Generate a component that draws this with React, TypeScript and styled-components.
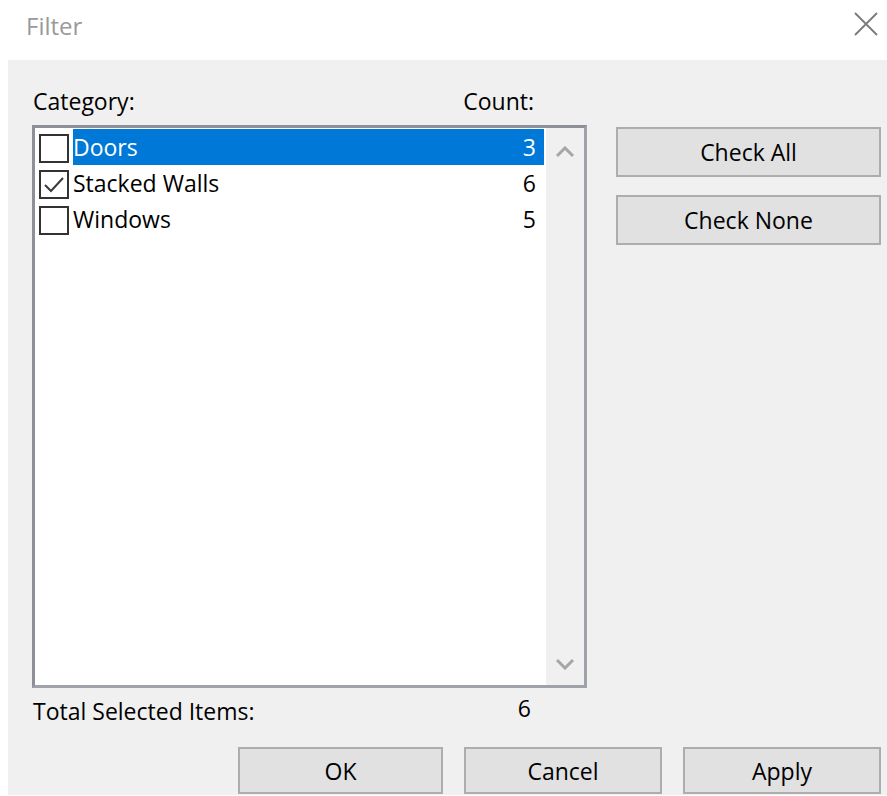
import { createGlobalStyle, styled } from "styled-components";

const GlobalStyle = createGlobalStyle`
  html, body {
    margin: 0;
    padding: 0;
    background: #ffffff;
  }
  body {
    font-family: "Open Sans", "Noto Sans", "Liberation Sans", sans-serif;
  }
`;

//window frame
const Window = styled.div`
  width: 887px;
  height: 796px;
  display: flex;
  flex-direction: column;
  background: #ffffff;
`;

const TitleBar = styled.div`
  height: 60px;
  display: flex;
  align-items: center;
  justify-content: space-between;
  padding: 0 6px 0 26px;
  box-sizing: border-box;
`;

const Title = styled.span`
  font-size: 24px;
  color: #9a9a9a;
  margin-top: -10px;
`;

const CloseButton = styled.div`
  width: 30px;
  height: 30px;
  display: flex;
  align-items: center;
  justify-content: center;
  margin-top: -12px;
`;

const Body = styled.div`
  flex: 1;
  margin: 0 0 1px 8px;
  background: #f0f0f0;
  display: flex;
  flex-direction: column;
  padding: 26px 6px 0 24px;
  box-sizing: border-box;
  font-size: 23px;
  color: #000;
`;

const Main = styled.div`
  display: flex;
  gap: 29px;
`;

const LeftColumn = styled.div`
  width: 555px;
  display: flex;
  flex-direction: column;
`;

const HeaderRow = styled.div`
  height: 30px;
  line-height: 30px;
  display: flex;
  justify-content: space-between;
  padding: 0 53px 0 1px;
  margin-bottom: 9px;
`;

//list box with its own scrollbar
const ListBox = styled.div`
  height: 563px;
  box-sizing: border-box;
  border: 3px solid #9fa2a8;
  border-top-color: #8d9096;
  border-left-color: #8d9096;
  background: #ffffff;
  display: flex;
`;

const List = styled.ul`
  flex: 1;
  margin: 0;
  padding: 1px 2px 0 4px;
  list-style: none;
`;

const Row = styled.li`
  height: 36px;
  display: flex;
  align-items: center;
`;

const CheckBox = styled.span`
  width: 30px;
  height: 29px;
  box-sizing: border-box;
  border: 2px solid #333333;
  background: #ffffff;
  display: flex;
  align-items: center;
  justify-content: center;
  margin: 3px 4px 0 0;
  flex-shrink: 0;
`;

const Item = styled.div<{ $selected: boolean }>`
  flex: 1;
  height: 36px;
  display: flex;
  align-items: center;
  justify-content: space-between;
  padding-right: 8px;
  background: ${(p) => (p.$selected ? "#0078d7" : "transparent")};
  color: ${(p) => (p.$selected ? "#ffffff" : "#000000")};
`;

const ScrollBar = styled.div`
  width: 38px;
  background: #f0f0f0;
  display: flex;
  flex-direction: column;
  justify-content: space-between;
  align-items: center;
  padding: 18px 0 15px;
  box-sizing: border-box;
`;

const TotalRow = styled.div`
  height: 40px;
  padding: 6px 56px 0 1px;
  box-sizing: border-box;
  display: flex;
  justify-content: space-between;
  align-items: center;
`;

const TotalCount = styled.span`
  margin-top: -6px;
`;

const SideButtons = styled.div`
  width: 265px;
  padding-top: 41px;
  display: flex;
  flex-direction: column;
  gap: 18px;
`;

const Button = styled.button<{ $width?: number }>`
  width: ${(p) => (p.$width ? `${p.$width}px` : "100%")};
  height: ${(p) => (p.$width ? "47px" : "50px")};
  background: #e1e1e1;
  border: 2px solid #adadad;
  font-family: inherit;
  font-size: 23px;
  color: #000;
  padding: 0;
`;

const Footer = styled.div`
  margin-top: 19px;
  display: flex;
  justify-content: flex-end;
  gap: 21px;
`;

const Chevron = ({ down }: { down?: boolean }) => (
  <svg width="20" height="12" viewBox="0 0 20 12">
    <path
      d={down ? "M2 2 L10 10 L18 2" : "M2 10 L10 2 L18 10"}
      fill="none"
      stroke="#a6a6a6"
      strokeWidth="3"
    />
  </svg>
);

interface Category {
  name: string;
  count: number;
  checked: boolean;
}

const categories: Category[] = [
  { name: "Doors", count: 3, checked: false },
  { name: "Stacked Walls", count: 6, checked: true },
  { name: "Windows", count: 5, checked: false },
];

export default function App() {
  const total = categories.filter((c) => c.checked).reduce((sum, c) => sum + c.count, 0);

  return (
    <Window>
      <GlobalStyle />
      <TitleBar>
        <Title>Filter</Title>
        <CloseButton>
          <svg width="24" height="24" viewBox="0 0 24 24">
            <path d="M1 1 L23 23 M23 1 L1 23" stroke="#7a7a7a" strokeWidth="1.8" />
          </svg>
        </CloseButton>
      </TitleBar>
      <Body>
        <Main>
          <LeftColumn>
            <HeaderRow>
              <span>Category:</span>
              <span>Count:</span>
            </HeaderRow>
            <ListBox>
              <List>
                {categories.map((c, i) => (
                  <Row key={c.name}>
                    <CheckBox>
                      {c.checked && (
                        <svg width="22" height="20" viewBox="0 0 22 20">
                          <path d="M2 10 L8 16 L20 3" fill="none" stroke="#3a3a3a" strokeWidth="2" />
                        </svg>
                      )}
                    </CheckBox>
                    <Item $selected={i === 0}>
                      <span>{c.name}</span>
                      <span>{c.count}</span>
                    </Item>
                  </Row>
                ))}
              </List>
              <ScrollBar>
                <Chevron />
                <Chevron down />
              </ScrollBar>
            </ListBox>
            <TotalRow>
              <span>Total Selected Items:</span>
              <TotalCount>{total}</TotalCount>
            </TotalRow>
          </LeftColumn>
          <SideButtons>
            <Button>Check All</Button>
            <Button>Check None</Button>
          </SideButtons>
        </Main>
        <Footer>
          <Button $width={205}>OK</Button>
          <Button $width={198}>Cancel</Button>
          <Button $width={198}>Apply</Button>
        </Footer>
      </Body>
    </Window>
  );
}
